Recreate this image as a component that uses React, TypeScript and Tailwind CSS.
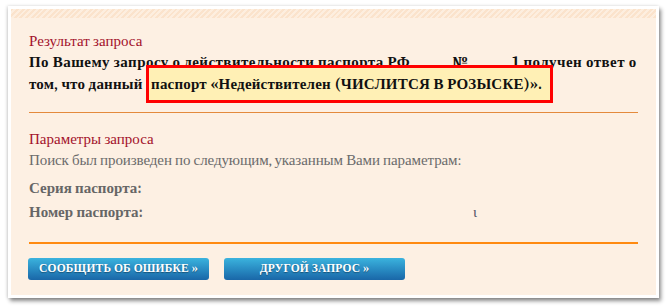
const Button = ({ label }: { label: string }) => (
  <button className="w-[181px] h-[22px] rounded-[3px] bg-gradient-to-b from-[#3bb3de] to-[#1a67a8] text-white text-[11.5px] font-bold uppercase tracking-[0.2px] [text-shadow:0_1px_1px_rgba(0,0,0,0.35)]">
    {label}
  </button>
);

const App = () => {
  return (
    <div className="w-[667px] h-[306px] bg-white pt-[6px] pl-[8px] font-serif [font-family:Liberation_Serif,serif]">
      <div className="w-[651px] h-[292px] bg-white p-[3px] shadow-[2px_3px_4px_rgba(0,0,0,0.45),-1px_0_3px_rgba(0,0,0,0.15)]">
        <div className="h-full bg-[#fdf0e3]">
          <div className="h-[9px] bg-[repeating-linear-gradient(135deg,#fbe3cc_0px,#fbe3cc_2px,#fdeedf_2px,#fdeedf_4px)]" />
          <div className="px-[18px] pt-[14px]">
            <p className="text-[15px] leading-[18px] text-[#a3122b]">Результат запроса</p>
            <p className="mt-[1px] text-[15px] leading-[22px] font-bold text-[#111]">
              <span className="tracking-[0.45px]">
                По Вашему запросу о действительности паспорта РФ
                <span className="inline-block w-[42px]" />№
                <span className="inline-block w-[44px]" />1 получен ответ о
              </span>
              <br />
              <span className="tracking-[0.2px]">
                том, что данный{" "}
                <span className="border-[3px] border-[#ff0000] bg-[#fff0b5] py-[7px] pl-[2px] pr-[8px]">
                  паспорт «Недействителен (ЧИСЛИТСЯ В РОЗЫСКЕ)».
                </span>
              </span>
            </p>
            <div className="mt-[17px] h-px bg-[#e48a3c]" />
            <p className="mt-[17px] text-[15px] leading-[18px] text-[#a3122b]">Параметры запроса</p>
            <p className="mt-[3px] text-[15px] leading-[18px] tracking-[-0.1px] text-[#6b6b6b]">
              Поиск был произведен по следующим, указанным Вами параметрам:
            </p>
            <p className="mt-[10px] text-[15px] leading-[18px] font-bold text-[#666]">Серия паспорта:</p>
            <p className="mt-[6px] text-[15px] leading-[18px] font-bold text-[#666] flex">
              <span className="w-[444px]">Номер паспорта:</span>
              <span className="font-normal text-[#556]">ι</span>
            </p>
            <div className="mt-[21px] h-[2px] bg-[#ff8a10]" />
            <div className="mt-[14px] flex gap-[15px] -ml-[1px]">
              <Button label="Сообщить об ошибке »" />
              <Button label="Другой запрос »" />
            </div>
          </div>
        </div>
      </div>
    </div>
  );
};

export default App;
